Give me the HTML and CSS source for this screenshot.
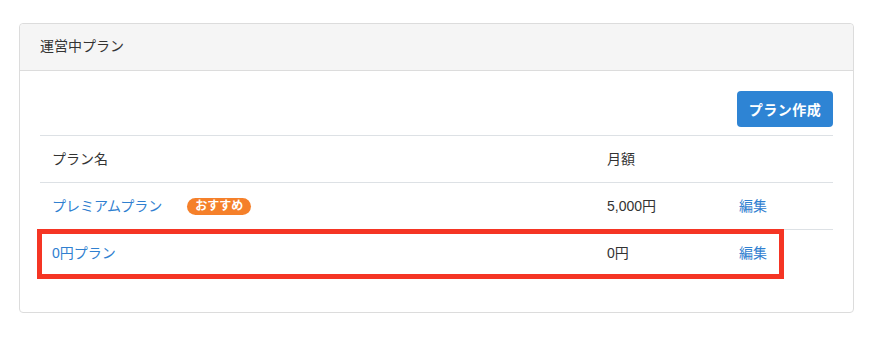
FILE: index.html
```html
<!DOCTYPE html>
<html lang="ja">
<head>
  <meta charset="UTF-8" />
  <meta name="viewport" content="width=device-width, initial-scale=1.0"/>
  <title>運営中プラン</title>
  <link rel="stylesheet" href="styles.css">
</head>
<body>
  <section class="card">
    <div class="card-header">運営中プラン</div>
    <div class="card-body">
      <div class="toolbar">
        <button class="btn-primary">プラン作成</button>
      </div>
      <div class="table-wrap">
        <table class="plans">
          <thead>
            <tr>
              <th class="col-name">プラン名</th>
              <th class="col-price">月額</th>
              <th class="col-edit"></th>
            </tr>
          </thead>
          <tbody>
            <tr>
              <td><a href="#">プレミアムプラン</a><span class="badge">おすすめ</span></td>
              <td>5,000円</td>
              <td><a href="#">編集</a></td>
            </tr>
            <tr>
              <td><a href="#">0円プラン</a></td>
              <td>0円</td>
              <td><a href="#">編集</a></td>
            </tr>
          </tbody>
        </table>
        <div class="highlight"></div>
      </div>
    </div>
  </section>
</body>
</html>
```

FILE: styles.css
```css
body {
  margin: 0;
  padding: 23px 0 0 19px;
  background: #fff;
  color: #333;
  font-family: "Liberation Sans", "Noto Sans CJK JP", sans-serif;
  font-size: 14px;
}
.card {
  width: 833px;
  border: 1px solid #dcdcdc;
  border-radius: 4px;
}
.card-header {
  background: #f5f5f5;
  border-bottom: 1px solid #dcdcdc;
  border-radius: 4px 4px 0 0;
  padding: 0 20px;
  height: 46px;
  line-height: 45px;
}
.card-body {
  padding: 20px 20px 36px;
}
.toolbar {
  display: flex;
  justify-content: flex-end;
  margin-bottom: 8px;
}
.btn-primary {
  width: 96px;
  height: 36px;
  background: #2e84d4;
  color: #fff;
  border: 0;
  border-radius: 4px;
  font-family: inherit;
  font-size: 14px;
  font-weight: bold;
  letter-spacing: 0.5px;
}
.table-wrap {
  position: relative;
}
.plans {
  width: 100%;
  border-collapse: collapse;
}
.plans th, .plans td {
  border-top: 1px solid #dde1e5;
  padding: 12px;
  height: 22px;
  line-height: 22px;
  text-align: left;
  font-weight: normal;
}
.col-name { width: 531px; }
.col-price { width: 108px; }
.plans a {
  color: #3080d0;
  text-decoration: none;
}
.badge {
  display: inline-block;
  margin-left: 25px;
  padding: 0 8px;
  height: 17px;
  line-height: 17px;
  border-radius: 9px;
  background: #f5802a;
  color: #fff;
  font-size: 12px;
  font-weight: bold;
  vertical-align: 1px;
}
.highlight {
  position: absolute;
  left: -3px;
  top: 94px;
  width: 737px;
  height: 40px;
  border: 5px solid #f53524;
}
```
